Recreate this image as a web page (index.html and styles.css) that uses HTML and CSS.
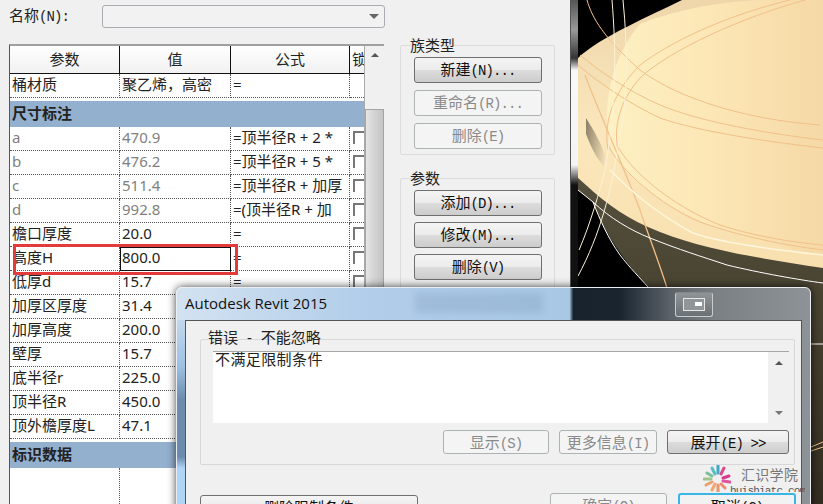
FILE: index.html
```html
<!DOCTYPE html>
<html lang="zh-CN">
<head>
  <meta charset="UTF-8" />
  <title>族类型</title>
  <link rel="stylesheet" href="styles.css">
</head>
<body>

<div class="screen">
  <div class="family-dialog">
    <div class="name-row">
      <span class="name-label">名称<span class="key">(N):</span></span>
      <div class="name-select"><span class="name-arrow"></span></div>
    </div>

    <div class="dialog-main">
      <div class="table-wrap">
        <table class="params">
          <colgroup>
            <col class="col-name"><col class="col-value"><col class="col-formula"><col class="col-lock">
          </colgroup>
          <thead>
            <tr><th>参数</th><th>值</th><th>公式</th><th class="lock-head">锁定</th></tr>
          </thead>
          <tbody>
            <tr><td>桶材质</td><td>聚乙烯，高密</td><td>=</td><td></td></tr>
            <tr class="group"><td colspan="4">尺寸标注</td></tr>
            <tr class="dim"><td>a</td><td>470.9</td><td class="formula">=顶半径R + 2 *</td><td><span class="check"></span></td></tr>
            <tr class="dim"><td>b</td><td>476.2</td><td class="formula">=顶半径R + 5 *</td><td><span class="check"></span></td></tr>
            <tr class="dim"><td>c</td><td>511.4</td><td class="formula">=顶半径R + 加厚</td><td><span class="check"></span></td></tr>
            <tr class="dim"><td>d</td><td>992.8</td><td class="formula">=(顶半径R + 加</td><td><span class="check"></span></td></tr>
            <tr><td>檐口厚度</td><td>20.0</td><td>=</td><td><span class="check"></span></td></tr>
            <tr><td>高度H</td><td class="editing">800.0</td><td>=</td><td><span class="check"></span></td></tr>
            <tr><td>低厚d</td><td>15.7</td><td>=</td><td><span class="check"></span></td></tr>
            <tr><td>加厚区厚度</td><td>31.4</td><td></td><td></td></tr>
            <tr><td>加厚高度</td><td>200.0</td><td></td><td></td></tr>
            <tr><td>壁厚</td><td>15.7</td><td></td><td></td></tr>
            <tr><td>底半径r</td><td>225.0</td><td></td><td></td></tr>
            <tr><td>顶半径R</td><td>450.0</td><td></td><td></td></tr>
            <tr><td>顶外檐厚度L</td><td>47.1</td><td></td><td></td></tr>
            <tr class="group"><td colspan="4">标识数据</td></tr>
            <tr class="blank"><td></td><td></td><td></td><td></td></tr>
          </tbody>
        </table>
        <div class="scrollbar">
          <span class="arrow-up"></span>
          <div class="thumb"></div>
        </div>
        <div class="red-mark"></div>
      </div>

      <div class="side">
        <div class="side-group first">
          <div class="side-title">族类型</div>
          <button class="btn">新建<span class="key">(N)...</span></button>
          <button class="btn off">重命名<span class="key">(R)...</span></button>
          <button class="btn off">删除<span class="key">(E)</span></button>
        </div>
        <div class="side-group tight">
          <div class="side-title">参数</div>
          <button class="btn">添加<span class="key">(D)...</span></button>
          <button class="btn">修改<span class="key">(M)...</span></button>
          <button class="btn">删除<span class="key">(V)</span></button>
        </div>
      </div>
    </div>
  </div>

  <div class="canvas">
    <div class="canvas-edge"></div>
    <svg class="model" viewBox="578 0 245 504" preserveAspectRatio="none">
      <defs>
        <linearGradient id="rimFill" x1="0" y1="0" x2="0" y2="1">
          <stop offset="0" stop-color="#eed6aa"/>
          <stop offset="0.5" stop-color="#fbe7bd"/>
          <stop offset="1" stop-color="#f8dfae"/>
        </linearGradient>
        <linearGradient id="discFill" x1="0" y1="0" x2="1" y2="0">
          <stop offset="0" stop-color="#fdf0c2"/>
          <stop offset="0.5" stop-color="#fce6b5"/>
          <stop offset="1" stop-color="#f5d9a6"/>
        </linearGradient>
        <linearGradient id="baseFill" x1="0" y1="0" x2="0" y2="1">
          <stop offset="0" stop-color="#55503c"/>
          <stop offset="1" stop-color="#332d20"/>
        </linearGradient>
        <linearGradient id="shade" x1="0" y1="0" x2="1" y2="0.3">
          <stop offset="0" stop-color="#8a7d64"/>
          <stop offset="1" stop-color="#fbe7bd"/>
        </linearGradient>
      </defs>
      <rect x="578" y="0" width="245" height="504" fill="#000"/>
      <path d="M578 178 L578 190 L593 202 C600 225 625 265 650 288 L650 504 L823 504 L823 260 Z" fill="url(#baseFill)"/>
      <path d="M578 58 C600 37 650 16 682 0 L823 0 L823 268 C760 258 700 250 648 227 C620 215 600 198 578 178 Z" fill="url(#rimFill)"/>
      <path d="M640 24 C680 8 730 0 770 0 L823 0 L823 255 C730 240 640 205 612 150 C600 110 610 60 640 24 Z" fill="url(#discFill)"/>
      <path d="M586 118 C592 128 604 145 610 172 C600 165 592 150 586 134 Z" fill="url(#shade)"/>
      <g fill="none" stroke="#f2c08a" stroke-width="1">
        <path d="M587 0 C592 18 604 38 640 70 C680 100 750 120 820 125"/>
        <path d="M580 55 C600 72 630 92 660 105 C700 122 770 134 823 140"/>
        <path d="M578 65 C600 84 630 104 660 118 C700 132 770 142 823 148"/>
        <path d="M608 150 C602 115 620 85 640 65 C680 35 740 12 790 0"/>
        <path d="M618 150 C612 120 625 95 640 78 C670 50 740 18 805 0"/>
        <path d="M617 145 C630 170 670 205 720 225 C760 238 800 243 823 245"/>
        <path d="M608 145 C620 170 660 205 700 222 C750 240 800 247 823 250"/>
        <path d="M585 75 C600 115 625 170 640 210 C650 240 660 265 667 288" stroke-width="1.3"/>
        <path d="M811 447 L823 442"/>
        <path d="M811 451 L823 447"/>
      </g>
      <g fill="none" stroke="#fff" stroke-width="1">
        <path d="M578 190 L593 202 C610 218 630 230 650 238 C680 250 700 256 727 265 C760 273 800 280 823 283"/>
        <path d="M593 202 C600 220 608 238 620 255 C630 268 640 278 648 287"/>
        <path d="M612 0 C616 50 617 100 605 170 C600 190 590 225 579 250" stroke="#fdf2d8"/>
        <path d="M623 0 C628 50 628 100 619 140 C612 190 600 235 578 276" stroke="#fdf2d8"/>
        <path d="M610 170 C625 185 650 210 693 233 C720 243 777 250 823 255" stroke="#fff6dc" stroke-width="1.5"/>
        <path d="M811 344 L823 344"/>
      </g>
    </svg>
  </div>

  <div class="error-window">
    <div class="frame-left"></div>
    <div class="title-bar">
      <span class="title-text">Autodesk Revit 2015</span>
      <div class="title-btn"><span class="title-btn-icon"></span></div>
    </div>
    <div class="error-body">
      <div class="error-group">
        <div class="error-title">错误 - 不能忽略</div>
        <div class="message-box">
          <div class="message-text">不满足限制条件</div>
          <div class="message-scroll">
            <span class="arrow-up"></span>
            <span class="arrow-down"></span>
          </div>
        </div>
        <div class="error-actions">
          <button class="btn off act-show">显示<span class="key">(S)</span></button>
          <button class="btn off act-more">更多信息<span class="key">(I)</span></button>
          <button class="btn act-expand">展开<span class="key">(E) &gt;&gt;</span></button>
        </div>
      </div>
      <div class="footer-actions">
        <button class="btn act-remove">删除限制条件</button>
        <button class="btn off act-ok">确定<span class="key">(O)</span></button>
        <button class="btn act-cancel">取消<span class="key">(C)</span></button>
      </div>
    </div>
  </div>

  <div class="watermark">
    <svg class="wm-logo" viewBox="0 0 28 28">
      <g stroke-width="3" stroke-linecap="round">
        <path d="M9 3 L12 9" stroke="#57bcc4"/>
        <path d="M15 1 L15 8" stroke="#3fa9c6"/>
        <path d="M21 3 L18 9" stroke="#d9498f"/>
        <path d="M26 11 L20 13" stroke="#d9398c"/>
        <path d="M27 17 L20 16" stroke="#e0559a"/>
        <path d="M22 23 L18 19" stroke="#ef8b70"/>
        <path d="M15 27 L15 20" stroke="#f0936a"/>
        <path d="M9 25 L12 19" stroke="#f4a46e"/>
        <path d="M3 20 L9 17" stroke="#e8a070"/>
        <path d="M1 14 L8 14" stroke="#9cc68c"/>
        <path d="M4 8 L9 11" stroke="#7cbf9c"/>
      </g>
    </svg>
    <div class="wm-text">
      <div class="wm-name">汇识学院</div>
      <div class="wm-url">huishiatc.com</div>
    </div>
  </div>
</div>

</body>
</html>
```

FILE: styles.css
```css
body {
  margin: 0;
  padding: 0;
  font-family: "Noto Sans", "Noto Sans CJK SC", sans-serif;
  font-size: 15px;
  color: #222;
}

.screen {
  position: relative;
  display: flex;
  width: 823px;
  height: 504px;
  overflow: hidden;
  background: #000;
}

.key {
  font-family: "Liberation Mono", "Noto Sans CJK SC", monospace;
  font-size: 14px;
  letter-spacing: -0.9px;
}

/* left dialog */
.family-dialog {
  width: 570px;
  flex: none;
  background: #f0f0f0;
}

.name-row {
  display: flex;
  align-items: center;
  height: 22px;
  padding: 5px 0 0 9px;
}

.name-label {
  width: 93px;
  line-height: 24px;
}

.name-select {
  display: flex;
  align-items: center;
  justify-content: flex-end;
  box-sizing: border-box;
  width: 283px;
  height: 23px;
  padding-right: 5px;
  background: #f2f2f2;
  border: 1px solid #a9adb2;
  border-radius: 3px;
}

.name-arrow {
  border-left: 5px solid transparent;
  border-right: 5px solid transparent;
  border-top: 5px solid #666;
}

.dialog-main {
  display: flex;
  margin-top: 17px;
  padding-left: 9px;
}

.table-wrap {
  position: relative;
  display: flex;
  align-items: flex-start;
  flex: none;
  width: 375px;
  height: 460px;
  overflow: hidden;
  background: #fff;
  border-top: 2px solid #a0a0a0;
  border-left: 1px solid #555;
  box-sizing: border-box;
}

.params {
  width: 354px;
  flex: none;
  table-layout: fixed;
  border-collapse: separate;
  border-spacing: 0;
  font-size: 15px;
  line-height: 19px;
}

.col-name { width: 110px; }
.col-value { width: 111px; }
.col-formula { width: 119px; }
.col-lock { width: 14px; }

.params th {
  box-sizing: border-box;
  height: 28px;
  padding: 0 0 1px;
  font-weight: normal;
  background: linear-gradient(#fff, #f1f1f1);
  border-right: 1px solid #111;
  border-bottom: 1px solid #111;
  white-space: nowrap;
  overflow: hidden;
}

.params th.lock-head {
  border-right: none;
  text-align: left;
  padding-left: 2px;
}

.params td {
  box-sizing: border-box;
  height: 24px;
  padding: 0 0 2px 2px;
  border-right: 1px dotted #555;
  border-bottom: 1px dotted #555;
  white-space: nowrap;
  overflow: hidden;
}

.params td:last-child {
  border-right: none;
  padding-left: 3px;
}

.params .dim td {
  color: #7f7f7f;
}

.params .dim td.formula {
  color: #222;
}

.params .group td {
  height: 29px;
  border-top: 3px solid #fff;
  border-right: none;
  border-bottom: none;
  padding-left: 2px;
  font-weight: bold;
  background: #94b0cf;
  background-clip: padding-box;
}

.params .blank td {
  height: 60px;
  border-bottom: none;
}

.params td.editing {
  outline: 1px solid #111;
  outline-offset: -1px;
}

.check {
  display: block;
  width: 10px;
  height: 11px;
  border-top: 2px solid #777;
  border-left: 2px solid #777;
}

.scrollbar {
  display: flex;
  flex-direction: column;
  align-items: center;
  align-self: stretch;
  flex: 1;
  background: #f0f0f0;
  border-left: 1px solid #aaa;
}

.arrow-up,
.arrow-down {
  display: block;
  border-left: 4px solid transparent;
  border-right: 4px solid transparent;
}

.arrow-up {
  border-bottom: 4px solid #555;
}

.arrow-down {
  border-top: 4px solid #777;
}

.scrollbar .arrow-up {
  margin-top: 7px;
}

.thumb {
  box-sizing: border-box;
  width: 19px;
  height: 400px;
  margin-top: 52px;
  background: linear-gradient(90deg, #e6e6e6, #d6d6d6 40%, #c4c4c4);
  border: 1px solid #a4a4a4;
  border-bottom: none;
}

.red-mark {
  position: absolute;
  left: 3px;
  top: 198px;
  width: 225px;
  height: 31px;
  box-sizing: border-box;
  border: 3px solid #e33a3c;
}

.side {
  width: 155px;
  flex: none;
  margin-left: 16px;
}

.side-group {
  box-sizing: border-box;
  display: flex;
  flex-direction: column;
  align-items: center;
  height: 110px;
  margin-top: 23px;
  padding: 11px 0 0 1px;
  border: 1px solid #dcdcdc;
  border-radius: 2px;
}

.side-group.first {
  margin-top: 1px;
}

.side-group .btn {
  margin-bottom: 7px;
}

.side-group.tight .btn {
  margin-bottom: 6px;
}

.side-title {
  align-self: flex-start;
  height: 0;
  margin: -12px 0 12px 8px;
  line-height: 0;
}

.btn {
  box-sizing: border-box;
  flex: none;
  width: 128px;
  height: 26px;
  padding: 0;
  font-family: "Noto Sans", "Noto Sans CJK SC", sans-serif;
  font-size: 15px;
  line-height: 22px;
  color: #111;
  white-space: nowrap;
  background: linear-gradient(#f4f4f4, #ececec 48%, #dcdcdc 52%, #cdcdcd);
  border: 1px solid #6f6f6f;
  border-radius: 3px;
}

.btn.off {
  color: #8a8a8a;
  background: #f4f4f4;
  border-color: #adb2b5;
}

/* canvas with the 3D model */
.canvas {
  display: flex;
  flex: 1;
  border-left: 1px solid #555;
}

.canvas-edge {
  width: 7px;
  flex: none;
  background: linear-gradient(#555, #999 30px, #333 58px, #f8f8f8 70px, #f4f4f4 165px, #111 185px, #111);
}

.model {
  display: block;
  width: 245px;
  height: 504px;
}

/* error dialog */
.error-window {
  position: absolute;
  left: 176px;
  top: 287px;
  width: 635px;
  height: 240px;
  box-sizing: border-box;
  padding: 0 8px;
  background: linear-gradient(90deg, #d3e2f1 0, #b1cde9 30%, #a8c8e6 62%, #18222c 62.6%, #1a2530 70%, #5c6369 78%, #7a8084 85%, #8d9397 100%);
  border: 1px solid #e8eef3;
  border-radius: 6px 6px 0 0;
  box-shadow: 0 0 9px rgba(0, 0, 0, 0.75);
}

.frame-left {
  position: absolute;
  left: 0;
  top: 32px;
  width: 8px;
  height: 190px;
  background: linear-gradient(#c2d8ec, #9cc0e2 25%, #6d8bab 42%, #6d8bab 72%, #b0d4f5 78%);
}

.title-bar {
  position: relative;
  display: flex;
  align-items: center;
  justify-content: space-between;
  height: 32px;
}

.title-bar::before {
  content: "";
  position: absolute;
  left: 230px;
  top: 5px;
  width: 128px;
  height: 20px;
  background: rgba(125, 155, 185, 0.3);
  filter: blur(3px);
}

.title-text {
  position: relative;
  padding-bottom: 2px;
  font-family: "Open Sans", sans-serif;
  font-size: 15px;
  color: #111;
}

.title-btn {
  display: flex;
  align-items: center;
  justify-content: center;
  box-sizing: border-box;
  width: 38px;
  height: 25px;
  margin-right: 89px;
  background: linear-gradient(#8e9498, #6a7074);
  border: 1px solid #c9cdcf;
  border-top-color: #888;
  border-radius: 3px;
}

.title-btn-icon {
  display: block;
  width: 20px;
  height: 11px;
  background: linear-gradient(#fff, #fff) no-repeat right 2px center / 7px 4px, #8f9599;
  border: 1px solid #e6e6e6;
}

.error-body {
  height: 200px;
  background: #f0f0f0;
  border: 1px solid #555;
  border-bottom: none;
  padding: 0 6px 0 14px;
}

.error-group {
  box-sizing: border-box;
  display: flex;
  flex-direction: column;
  height: 126px;
  margin-top: 18px;
  padding: 0 5px 0 12px;
  border: 1px solid #d8d8d8;
  border-radius: 2px;
}

.error-title {
  align-self: flex-start;
  height: 14px;
  margin: -3px 0 0 -8px;
  padding: 0 3px;
  line-height: 0;
  word-spacing: 5px;
}

.message-box {
  display: flex;
  justify-content: space-between;
  height: 71px;
  background: #fff;
  border-top: 1px solid #a6a6a6;
}

.message-text {
  padding-left: 2px;
  line-height: 15px;
  letter-spacing: 0.4px;
}

.message-scroll {
  display: flex;
  flex-direction: column;
  align-items: center;
  justify-content: space-between;
  width: 21px;
  padding: 9px 0 8px;
  box-sizing: border-box;
  background: #f0f0f0;
}

.error-actions {
  display: flex;
  justify-content: flex-end;
  gap: 10px;
  margin-top: 7px;
}

.error-actions .btn {
  height: 24px;
}

.act-show { width: 106px; }
.act-more { width: 98px; }
.act-expand { width: 122px; }

.footer-actions {
  display: flex;
  margin-top: 28px;
}

.footer-actions .btn {
  height: 26px;
  padding-bottom: 4px;
}

.act-remove {
  width: 218px;
  margin-top: 2px;
}

.act-ok {
  width: 117px;
  margin-left: 132px;
}

.act-cancel {
  width: 118px;
  margin-left: 11px;
  border: 2px solid #39b6e6;
  background: #f2f2f2;
}

/* watermark */
.watermark {
  position: absolute;
  left: 703px;
  top: 465px;
  display: flex;
  height: 27px;
  overflow: hidden;
}

.wm-logo {
  width: 28px;
  height: 28px;
  flex: none;
}

.wm-text {
  margin-left: -1px;
}

.wm-name {
  margin-left: 11px;
  font-size: 14px;
  line-height: 20px;
  color: #777;
  letter-spacing: 0.3px;
}

.wm-url {
  font-family: "Liberation Mono", monospace;
  font-size: 11px;
  line-height: 13px;
  color: #555;
  letter-spacing: -0.8px;
}
```
